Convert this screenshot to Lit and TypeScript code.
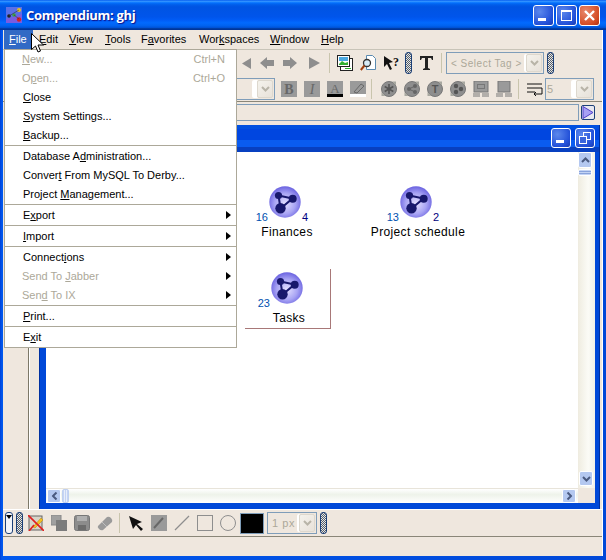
import { LitElement, html, css, svg } from 'lit';
import { customElement } from 'lit/decorators.js';

// "&x" marks the mnemonic letter
const label = (text: string) => {
  const i = text.indexOf('&');
  if (i < 0) return text;
  return html`${text.slice(0, i)}<u>${text[i + 1]}</u>${text.slice(i + 2)}`;
};

const MENUBAR = ['&File', '&Edit', '&View', '&Tools', 'F&avorites', 'Wor&kspaces', '&Window', '&Help'];

type Item = { t: string; off?: boolean; key?: string; sub?: boolean };
const MENU: Item[][] = [
  [
    { t: '&New...', off: true, key: 'Ctrl+N' },
    { t: 'O&pen...', off: true, key: 'Ctrl+O' },
    { t: '&Close' },
    { t: '&System Settings...' },
    { t: '&Backup...' },
  ],
  [
    { t: 'Database A&dministration...' },
    { t: 'Conver&t From MySQL To Derby...' },
    { t: 'Project &Management...' },
  ],
  [{ t: 'E&xport', sub: true }],
  [{ t: '&Import', sub: true }],
  [
    { t: 'Connect&ions', sub: true },
    { t: 'Send To &Jabber', off: true, sub: true },
    { t: 'Sen&d To IX', off: true, sub: true },
  ],
  [{ t: '&Print...' }],
  [{ t: 'E&xit' }],
];

const NODES = [
  { x: 223, y: 34, name: 'Finances', a: '16', b: '4' },
  { x: 354, y: 34, name: 'Project schedule', a: '13', b: '2' },
  { x: 225, y: 120, name: 'Tasks', a: '23', b: '' },
];

const G = '#8e8e8e';
const icon = (body: unknown, w = 16, h = 16) =>
  html`<svg class="ic" width=${w} height=${h} viewBox="0 0 ${w} ${h}">${body}</svg>`;

const chevron = html`<svg width="9" height="6" viewBox="0 0 9 6"><path d="M1 1l3.5 3.5L8 1" fill="none" stroke="currentColor" stroke-width="2"/></svg>`;

const grayBox = (body: unknown) =>
  icon(svg`<rect width="16" height="16" fill="#9a9a9a"/>${body}`);

const ballIcon = (inner: unknown) =>
  icon(svg`<circle cx="8" cy="8" r="7.5" fill="${G}" stroke="#777"/>${inner}<path d="M11 .5l4 0 0 4zM.5 11l0 4 4 0z" fill="#a8a8a0"/>`);

const nodeIcon = html`<svg width="32" height="32" viewBox="0 0 32 32">
  <defs>
    <radialGradient id="ball" cx="0.5" cy="0.55" r="0.55">
      <stop offset="0" stop-color="#e4e0ff"/><stop offset="0.6" stop-color="#a8a4f4"/><stop offset="1" stop-color="#6a62e0"/>
    </radialGradient>
  </defs>
  <circle cx="16" cy="16" r="15.7" fill="url(#ball)"/>
  <path d="M9.5 9.5L23.5 12.5L11.5 22.5Z" fill="none" stroke="#18186c" stroke-width="2"/>
  <circle cx="9.5" cy="9.5" r="3.6" fill="#18186c"/>
  <circle cx="23.7" cy="12.7" r="4" fill="#18186c"/>
  <circle cx="11.5" cy="22.3" r="5.2" fill="#18186c"/>
</svg>`;

@customElement('app-root')
export class AppRoot extends LitElement {
  static styles = css`
    :host {
      display: block;
      width: 606px;
      height: 560px;
      position: relative;
      overflow: hidden;
      font-family: 'Liberation Sans', sans-serif;
      font-size: 11px;
      color: #000;
    }
    u { text-underline-offset: 1px; }
    svg { display: block; flex: none; }

    .window {
      height: 560px;
      box-sizing: border-box;
      padding: 0 3px 4px;
      background: linear-gradient(90deg, #0040d8, #0058ee 2px, #0048d8);
      display: flex;
      flex-direction: column;
    }
    .title {
      height: 30px;
      margin: 0 -3px;
      padding: 0 3px 0 6px;
      display: flex;
      align-items: center;
      gap: 4px;
      flex: none;
      background: linear-gradient(180deg, #0058ee 0%, #3593ff 4%, #288eff 6%, #127dff 8%, #036ffc 10%, #0262ee 14%, #0057e5 20%, #0054e3 24%, #0055eb 56%, #005bf5 66%, #026afe 76%, #0062ef 86%, #0052d6 92%, #0040ab 94%, #003092 100%);
      color: #fff;
      font: bold 13px 'Open Sans', sans-serif;
      letter-spacing: -0.3px;
      text-shadow: 1px 1px 1px #0f1089;
    }
    .title .name { flex: 1; }
    .capbtns { display: flex; gap: 2px; margin-right: 3px; }
    .cap {
      width: 21px;
      height: 21px;
      box-sizing: border-box;
      border: 1px solid #fff;
      border-radius: 3px;
      background: radial-gradient(circle at 30% 30%, #5c88ec, #2250d8 70%, #1a3cb0);
      position: relative;
    }
    .cap.close { background: radial-gradient(circle at 30% 30%, #e8886c, #d44c24 70%, #b03010); }
    .cap svg { position: absolute; left: 0; top: 0; }

    .body {
      flex: 1;
      background: #efe7de;
      border-right: 1px solid #fff;
      display: flex;
      flex-direction: column;
      min-height: 0;
    }
    .menubar {
      height: 19px;
      flex: none;
      display: grid;
      grid-template-columns: 1px 30px 30px 36px 36px 58px 71px 51px 40px;
      align-items: start;
      line-height: 18px;
      border-bottom: 1px solid #c8c4b8;
    }
    .menubar span { padding-left: 5px; white-space: nowrap; }
    .menubar span.on {
      background: #316ac5;
      color: #fff;
      height: 19px;
      width: 29px;
      box-sizing: border-box;
    }

    .tb { flex: none; display: flex; align-items: center; gap: 7px; }
    .tb1 { height: 26px; padding-left: 233px; }
    .tb2 { padding-left: 233px; border-bottom: 1px solid #8a8678; box-sizing: border-box; height: 26px; }
    .sep { width: 1px; height: 20px; background: #c9c5ad; flex: none; }
    .tb1 .sep:first-of-type { margin-left: 1px; }
    .grip {
      width: 7px;
      height: 22px;
      flex: none;
      box-sizing: border-box;
      border: 1px solid #1c4078;
      border-radius: 3px;
      background: repeating-conic-gradient(#55606c 0 25%, #e6e6e6 0 50%) 0 0 / 2px 2px;
    }
    .select {
      height: 22px;
      flex: none;
      box-sizing: border-box;
      border: 1px solid #7f9db9;
      display: flex;
      align-items: center;
      justify-content: space-between;
      padding: 0 1px 0 4px;
      color: #aca899;
      letter-spacing: 0.6px;
      white-space: nowrap;
    }
    .select i {
      width: 16px;
      height: 18px;
      flex: none;
      border-radius: 2px;
      background: linear-gradient(135deg, #f4f2ec, #e8e2da);
      border: 1px solid #ddd8ce;
      box-sizing: border-box;
      box-shadow: -2px 0 0 #fff;
      color: #b8b4a8;
      display: flex;
      align-items: center;
      justify-content: center;
    }
    .sel-tag { width: 98px; margin-left: -3px; font-size: 10px; letter-spacing: 0.5px; }
    .sel-5 { width: 49px; margin-left: -5px; padding-left: 1px; }
    .sel-5 i, .sel-hidden i { box-shadow: -5px 0 0 #fff; }
    .sel-hidden { width: 60px; margin-left: -21px; margin-right: -1px; }
    .sep-a { margin: 0 2px 0 -2px; }
    .sep-b { margin: 0 1px 0 -1px; }
    .addr {
      height: 20px;
      flex: none;
      display: flex;
      align-items: center;
      gap: 2px;
      padding-left: 100px;
    }
    .addr .field {
      width: 476px;
      height: 17px;
      border: 1px solid #7f9db9;
      box-sizing: border-box;
    }
    .play {
      width: 14px;
      height: 15px;
      box-sizing: border-box;
      border: 1px solid #1c4078;
      border-radius: 2px;
      background: #e8e8f0;
    }

    .main { flex: 1; min-height: 0; display: flex; margin-top: 3px; border-bottom: 1px solid #fff; }
    .leftpane { width: 25px; flex: none; border-right: 1px solid #7c7868; box-shadow: 1px 0 0 #fff; margin-right: 10px; }
    .frame {
      flex: 1;
      min-width: 0;
      margin-right: 2px;
      background: #0048d8;
      border-left: 1px solid #0030a0;
      border-right: 1px solid #0030a0;
      display: flex;
      flex-direction: column;
      padding: 0 4px 6px 6px;
    }
    .frame-title {
      flex: none;
      height: 27px;
      margin: 0 -4px 0 -6px;
      padding-right: 4px;
      display: flex;
      justify-content: flex-end;
      align-items: center;
      gap: 4px;
      background: linear-gradient(180deg, #0050e0 0 4px, #0046e0 4px 15px, #0a5cf0 15px 22px, #0840c0 22px);
    }
    .frame-title .cap { width: 20px; height: 20px; margin-top: -1px; }
    .pane {
      flex: 1;
      min-height: 0;
      display: grid;
      grid-template-columns: 1fr 17px;
      grid-template-rows: 1fr 15px;
      background: #efe7de;
    }
    .canvas { background: #fff; position: relative; overflow: hidden; }
    .vbar {
      background: linear-gradient(90deg, #efece0, #fbfbf6 60%, #f3f1e8);
      display: flex;
      flex-direction: column;
      align-items: flex-start;
      gap: 1px;
      position: relative;
    }
    .hbar {
      background: linear-gradient(180deg, #fff, #eef3ea 40%, #fff);
      border-top: 1px solid #e8e4da;
      display: flex;
      gap: 1px;
      align-items: center;
      justify-content: space-between;
      padding: 0 2px 0 1px;
    }
    .sb {
      width: 14px;
      height: 14px;
      flex: none;
      border: 1px solid #fff;
      border-radius: 2px;
      background: #b4c8f0;
      color: #4a5a80;
      display: flex;
      align-items: center;
      justify-content: center;
      box-sizing: border-box;
    }
    .vbar .sb { height: 16px; }
    .vbar .sb.end { position: absolute; bottom: 2px; left: 1px; height: 15px; }
    .vbar .thumb {
      width: 14px;
      height: 7px;
      border: 1px solid #fff;
      border-radius: 2px;
      box-sizing: border-box;
      background: repeating-linear-gradient(180deg, #c4d4f4 0 1px, #8aa4dc 1px 2px);
    }
    .hbar .start { display: flex; gap: 1px; }
    .hbar .thumb {
      width: 7px;
      height: 14px;
      border: 1px solid #c0d0f0;
      border-radius: 2px;
      box-sizing: border-box;
      background: repeating-linear-gradient(90deg, #c4d4f4 0 1px, #e8eefa 1px 2px);
    }
    .flip { transform: rotate(180deg); }
    .left { transform: rotate(90deg); }
    .right { transform: rotate(-90deg); }

    .node { position: absolute; width: 32px; height: 32px; }
    .node .c { position: absolute; top: 26px; font-size: 11px; line-height: 11px; }
    .node .a { right: 33px; color: #0050b0; }
    .node .b { left: 33px; color: #000080; }
    .node .n {
      position: absolute;
      top: 39px;
      left: 18px;
      transform: translateX(-50%);
      white-space: nowrap;
      font-size: 12px;
      letter-spacing: 0.35px;
      line-height: 14px;
    }
    .group-box {
      position: absolute;
      left: 199px;
      top: 117px;
      width: 85px;
      height: 59px;
      border-right: 1px solid #a87878;
      border-bottom: 1px solid #a87878;
    }

    .tb-bottom { height: 26px; padding-left: 2px; gap: 7px; }
    .drawer {
      width: 8px;
      height: 22px;
      flex: none;
      box-sizing: border-box;
      border: 1px solid #1c4078;
      border-radius: 3px;
      background: #f4f6fa;
      margin-right: -4px;
      display: flex;
      justify-content: center;
    }
    .drawer::before {
      content: '';
      margin-top: 2px;
      border: 3px solid transparent;
      border-top: 4px solid #000;
      border-bottom: 0;
      height: 0;
    }
    .swatch { width: 24px; height: 21px; background: #000; border: 1px solid #7f9db9; box-sizing: border-box; flex: none; margin: 0 -3px; }
    .sel-px { width: 50px; margin-right: -4px; margin-left: -1px; }
    .status { flex: none; height: 20px; border-top: 1px solid #8a8678; box-sizing: border-box; }

    .menu {
      position: absolute;
      left: 4px;
      top: 49px;
      width: 233px;
      height: 299px;
      box-sizing: border-box;
      background: #fff;
      border: 1px solid #aca899;
    }
    .group { padding-bottom: 1px; border-top: 1px solid #aca899; }
    .group:first-child { border-top: 0; padding-bottom: 1px; margin-top: -1px; }
    .row {
      height: 19px;
      display: flex;
      align-items: center;
      justify-content: space-between;
      padding: 0 11px 0 18px;
      white-space: nowrap;
    }
    .row.off { color: #aca899; padding-left: 17px; }
    .row b {
      width: 0;
      height: 0;
      margin-right: -6px;
      border-left: 5px solid #000;
      border-top: 4.5px solid transparent;
      border-bottom: 4.5px solid transparent;
    }
    .cursor { position: absolute; left: 31px; top: 33px; }
  `;

  renderMenu() {
    return html`<div class="menu">
      ${MENU.map(
        (group) => html`<div class="group">
          ${group.map(
            (it) => html`<div class="row ${it.off ? 'off' : ''}">
              <span>${label(it.t)}</span>
              ${it.key ? html`<span>${it.key}</span>` : ''}
              ${it.sub ? html`<b></b>` : ''}
            </div>`,
          )}
        </div>`,
      )}
    </div>`;
  }

  renderCaption() {
    return html`<div class="capbtns">
      <div class="cap"><svg width="19" height="19"><rect x="4" y="12" width="8" height="3" fill="#fff"/></svg></div>
      <div class="cap"><svg width="19" height="19"><rect x="4.5" y="4.5" width="10" height="10" fill="none" stroke="#fff"/><rect x="4" y="4" width="11" height="2" fill="#fff"/></svg></div>
      <div class="cap close"><svg width="19" height="19"><path d="M5 5l9 9M14 5l-9 9" stroke="#fff" stroke-width="2.4"/></svg></div>
    </div>`;
  }

  renderToolbar1() {
    return html`<div class="tb tb1">
      ${icon(svg`<path d="M15 3v11L6 8.5z" fill="${G}"/>`)}
      ${icon(svg`<path d="M1 8l7-6v3h7v6H8v3z" fill="${G}"/>`)}
      ${icon(svg`<path d="M15 8L8 2v3H1v6h7v3z" fill="${G}"/>`)}
      ${icon(svg`<path d="M4 2v12l11-6z" fill="${G}"/>`)}
      <div class="sep"></div>
      ${icon(svg`<rect x="3.5" y="3.5" width="12" height="12" fill="#fff" stroke="#222"/><rect x=".5" y=".5" width="12" height="11" fill="#fff" stroke="#222"/><rect x="2" y="2" width="9" height="4" fill="#4aa8e0"/><path d="M2 9l3-3 3 2 3-1v3H2z" fill="#30b030"/><path d="M8 13h6v1H8z" fill="#30b030"/>`)}
      ${icon(svg`<path d="M6.5.5h6l3 3v11h-9z" fill="#fff" stroke="#5a8ab0"/><circle cx="7" cy="8" r="3.5" fill="#d8ecf8" stroke="#333" stroke-width="1.3"/><path d="M4.5 10.5L.8 15" stroke="#a04010" stroke-width="2"/>`)}
      ${icon(svg`<path d="M1 1l9 6-4 1 3 6-2 1-3-6-3 3z" fill="#111"/><text x="10" y="11" font-family="Liberation Serif" font-weight="bold" font-size="12" fill="#111">?</text>`, 17)}
      <div class="grip" style="margin-left:-2px"></div>
      ${icon(svg`<path d="M1 1h13v4l-1 0-1-2H9v10l2 1v1H4v-1l2-1V3H3L2 5H1z" fill="#222"/>`, 15)}
      <div class="sep"></div>
      <div class="select sel-tag"><span>&lt; Select Tag &gt;</span><i>${chevron}</i></div>
      <div class="grip" style="margin-left:-4px"></div>
    </div>`;
  }

  renderToolbar2() {
    return html`<div class="tb tb2">
      <div class="select sel-hidden"><span></span><i>${chevron}</i></div>
      ${grayBox(svg`<text x="8" y="13" text-anchor="middle" font-family="Liberation Serif" font-weight="bold" font-size="14" fill="#686868">B</text>`)}
      ${grayBox(svg`<text x="8" y="13" text-anchor="middle" font-family="Liberation Serif" font-style="italic" font-size="14" fill="#686868">I</text>`)}
      ${icon(svg`<rect width="16" height="13" fill="#9a9a9a"/><rect y="13" width="16" height="3" fill="#000"/><text x="8" y="12" text-anchor="middle" font-family="Liberation Serif" font-size="13" fill="#686868">A</text>`)}
      ${icon(svg`<rect width="16" height="13" fill="#9a9a9a"/><rect y="13" width="16" height="3" fill="#fff"/><path d="M4 11l7-8 3 2-7 7z" fill="none" stroke="#686868"/>`)}
      <div class="sep sep-a"></div>
      ${ballIcon(svg`<path d="M8 3v10M3.7 5.5l8.6 5M12.3 5.5l-8.6 5" stroke="#555" stroke-width="1.6"/>`)}
      ${ballIcon(svg`<circle cx="5" cy="8" r="2" fill="#666"/><circle cx="11" cy="5" r="2" fill="#666"/><circle cx="11" cy="11" r="2" fill="#666"/><path d="M5 8l6-3M5 8l6 3" stroke="#666"/>`)}
      ${ballIcon(svg`<text x="8" y="12" text-anchor="middle" font-family="Liberation Sans" font-weight="bold" font-size="11" fill="#555">T</text>`)}
      ${ballIcon(svg`<circle cx="6" cy="5" r="2.2" fill="#555"/><circle cx="6" cy="11" r="2.2" fill="#555"/><circle cx="11" cy="8" r="2.2" fill="#555"/>`)}
      ${icon(svg`<rect x="1" width="14" height="11" fill="#9a9a9a" stroke="#777"/><rect x="4.5" y="3.5" width="7" height="4" fill="none" stroke="#555" stroke-dasharray="1 1"/><path d="M0 13h7M9 13h7M0 15h7M9 15h7" stroke="#777"/>`)}
      ${icon(svg`<rect x="2" width="12" height="11" fill="#9a9a9a" stroke="#777"/><path d="M0 13h7M9 13h7M0 15h7M9 15h7" stroke="#777"/>`)}
      <div class="sep sep-b"></div>
      ${icon(svg`<path d="M0 3h15M0 7h15M0 11h8" stroke="#111"/><path d="M15 7v6H7M9 11l-2 2 2 2" fill="none" stroke="#111"/>`)}
      <div class="select sel-5"><span>5</span><i>${chevron}</i></div>
    </div>`;
  }

  renderBottom() {
    return html`<div class="tb tb-bottom">
      <div class="drawer"></div>
      <div class="grip" style="margin-right:-2px"></div>
      ${icon(svg`<rect x="1" y="1" width="13" height="14" fill="#d8d4c8" stroke="#666"/><path d="M5 12l8-9 2 2-8 8z" fill="#f4c020" stroke="#b08010" stroke-width=".5"/><path d="M0 0l16 16M1 16L6 10" stroke="#e02020" stroke-width="1.6"/>`)}
      ${icon(svg`<rect x="0" y="0" width="10" height="10" fill="#a0a0a0" stroke="#888"/><rect x="5" y="5" width="11" height="11" fill="#7c7c7c"/>`)}
      ${icon(svg`<rect x=".5" y=".5" width="15" height="15" rx="2" fill="#8c8c8c" stroke="#777"/><rect x="3" y="1" width="10" height="5" fill="#b0b0b0"/><rect x="4" y="10" width="8" height="5" fill="#6c6c6c"/>`)}
      ${icon(svg`<path d="M1 11L10 2q2-1 4 1t1 4l-9 8q-2 1-4-1t-1-3z" fill="#9a9a9a"/><path d="M5 7l5 5" stroke="#c0c0c0"/>`)}
      <div class="sep sep-b"></div>
      ${icon(svg`<path d="M1 1l13 6-5 2 6 5-2 2-5-6-3 4z" fill="#111"/>`)}
      ${icon(svg`<rect width="16" height="16" fill="#9a9a9a"/><path d="M3 13l9-10" stroke="#686868" stroke-width="2"/>`)}
      ${icon(svg`<path d="M1 15L15 1" stroke="${G}" stroke-width="1.3"/>`)}
      ${icon(svg`<rect x=".5" y=".5" width="15" height="15" fill="none" stroke="${G}"/>`)}
      ${icon(svg`<circle cx="8" cy="8" r="7.5" fill="none" stroke="${G}"/>`)}
      <div class="swatch"></div>
      <div class="select sel-px"><span>1 px</span><i>${chevron}</i></div>
      <div class="grip"></div>
    </div>`;
  }

  render() {
    return html`<div class="window">
        <div class="title">
          ${icon(svg`<rect width="16" height="16" fill="#7a5ce0"/><path d="M0 0h16v7L0 12z" fill="#5a70e8"/><circle cx="3" cy="9" r="1.8" fill="#222"/><circle cx="8" cy="8" r="1.8" fill="#40a040"/><circle cx="13" cy="3" r="2" fill="#e8c020"/><circle cx="13" cy="12.5" r="2.2" fill="#d82020"/><path d="M3 9l10-6M8 8l5 4" stroke="#334" stroke-width=".6"/>`)}
          <span class="name">Compendium: ghj</span>
          ${this.renderCaption()}
        </div>
        <div class="body">
          <div class="menubar">
            <span style="padding:0"></span>
            ${MENUBAR.map((m, i) => html`<span class=${i === 0 ? 'on' : ''}>${label(m)}</span>`)}
          </div>
          ${this.renderToolbar1()}
          ${this.renderToolbar2()}
          <div class="addr">
            <div class="field"></div>
            <div class="play"><svg width="12" height="13"><path d="M1 .5v12l10-6z" fill="#a8a0f4" stroke="#5040c8"/></svg></div>
          </div>
          <div class="main">
            <div class="leftpane"></div>
            <div class="frame">
              <div class="frame-title">
                <div class="cap"><svg width="18" height="18"><rect x="4" y="11" width="8" height="3" fill="#fff"/></svg></div>
                <div class="cap"><svg width="18" height="18"><rect x="7.5" y="3.5" width="7" height="7" fill="none" stroke="#fff"/><rect x="3.5" y="7.5" width="7" height="7" fill="#3a66dc" stroke="#fff"/></svg></div>
              </div>
              <div class="pane">
                <div class="canvas">
                  ${NODES.map(
                    (n) => html`<div class="node" style="left:${n.x}px;top:${n.y}px">
                      ${nodeIcon}
                      <span class="c a">${n.a}</span>
                      <span class="c b">${n.b}</span>
                      <span class="n">${n.name}</span>
                    </div>`,
                  )}
                  <div class="group-box"></div>
                </div>
                <div class="vbar">
                  <div class="sb"><span class="flip">${chevron}</span></div>
                  <div class="thumb"></div>
                  <div class="sb end">${chevron}</div>
                </div>
                <div class="hbar">
                  <div class="start">
                    <div class="sb"><span class="left">${chevron}</span></div>
                    <div class="thumb"></div>
                  </div>
                  <div class="sb"><span class="right">${chevron}</span></div>
                </div>
                <div></div>
              </div>
            </div>
          </div>
          ${this.renderBottom()}
          <div class="status"></div>
        </div>
      </div>
      ${this.renderMenu()}
      <svg class="cursor" width="13" height="21" viewBox="0 0 13 21">
        <path d="M.5.5v16l4-3.5 2.5 6 2.5-1-2.5-6h5.5z" fill="#fff" stroke="#000"/>
      </svg>`;
  }
}
